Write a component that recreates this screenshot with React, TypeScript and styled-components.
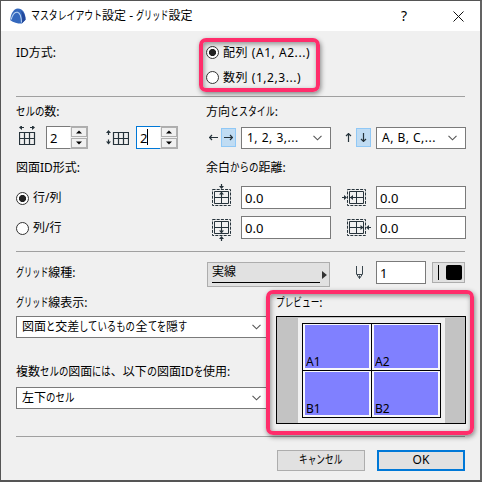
import React from 'react';
import styled, { createGlobalStyle } from 'styled-components';

const Global = createGlobalStyle`
  * { box-sizing: border-box; }
  body { margin: 0; font: 12px/18px "Noto Sans", "Noto Sans CJK JP", sans-serif; color: #000; }
`;

const Dialog = styled.main`
  position: relative;
  width: 482px;
  height: 482px;
  border: 1px solid #555;
  border-width: 1px 2px 2px 1px;
  border-color: #555 #636363 #555 #555;
  background: #f0f0f0;
  overflow: hidden;
`;
const TitleBar = styled.header`
  height: 30px;
  display: flex;
  align-items: center;
  background: #fff;
  padding: 0 16px 0 9px;
`;
const TitleText = styled.div`flex: 1; padding-left: 5px;`;
const TitleIcons = styled.div`display: flex; align-items: center; gap: 46px;`;
const Body = styled.div`padding: 0 15px; width: 480px;`;
const Rule = styled.hr`
  height: 1px;
  border: 0;
  margin: 0;
  width: 449px;
  background: #a0a0a0;
`;
const Row = styled.div<{ $h: number; $top?: number }>`
  display: flex;
  align-items: center;
  height: ${p => p.$h}px;
  padding-top: ${p => p.$top ?? 0}px;
`;
const Columns = styled.div<{ $h: number }>`
  display: grid;
  grid-template-columns: 190px 260px;
  height: ${p => p.$h}px;
`;
const Gap = styled.div<{ $w: number }>`flex: none; width: ${p => p.$w}px;`;
const Label = styled.span<{ $track?: number; $size?: number }>`
  flex: none;
  white-space: nowrap;
  font-size: ${p => p.$size ?? 12}px;
  letter-spacing: ${p => p.$track ?? 0}px;
`;
const KanaRun = styled.span<{ $em: number; $scale: number }>`
  display: inline-block;
  width: ${p => p.$em}em;
  letter-spacing: 0;
  white-space: nowrap;
  transform: scaleX(${p => p.$scale});
  transform-origin: 0 50%;
`;
const RadioLabel = styled.div`display: flex; align-items: center; gap: 4px; height: 24px;`;
const Dot = styled.span<{ $on?: boolean }>`
  width: 13px;
  height: 13px;
  border: 1px solid #333;
  border-radius: 50%;
  background: ${p => (p.$on ? 'radial-gradient(circle, #222 3.2px, #fff 3.9px)' : '#fff')};
`;
const Field = styled.div<{ $w: number; $h?: number }>`
  width: ${p => p.$w}px;
  height: ${p => p.$h ?? 23}px;
  flex: none;
  display: flex;
  align-items: center;
  border: 1px solid #7a7a7a;
  background: #fff;
  padding-left: 3px;
  font-size: 13px;
`;
const SelectBox = styled(Field)`
  justify-content: space-between;
  padding: 0 8px 0 5px;
`;
const Spinner = styled.div`
  display: flex;
  flex: none;
  width: 42px;
  height: 23px;
  border: 1px solid #adadad;
  background: #f0f0f0;
`;
const SpinValue = styled.div<{ $focus?: boolean }>`
  width: 24px;
  height: 23px;
  margin: -1px 0 0 -1px;
  border: solid ${p => (p.$focus ? '#0078d7' : '#7a7a7a')};
  border-width: 1px 0 1px 1px;
  background: #fff;
  padding: 2px 0 0 3px;
  font-size: 13px;
  display: flex;
`;
const Caret = styled.i`width: 1px; height: 16px; background: #000;`;
const SpinButtons = styled.div`flex: 1; display: flex; flex-direction: column; gap: 1px; padding-left: 1px;`;
const SpinButton = styled.div`
  flex: 1;
  border: 1px solid #b0b0b0;
  display: flex;
  align-items: center;
  justify-content: center;
`;
const Arrow = styled.div<{ $on?: boolean }>`
  width: 15px;
  height: 19px;
  flex: none;
  display: flex;
  align-items: center;
  justify-content: center;
  border: 1px solid ${p => (p.$on ? '#90c8f6' : 'transparent')};
  background: ${p => (p.$on ? '#c0dcf3' : 'transparent')};
`;
const LineButton = styled.div`
  width: 123px;
  height: 25px;
  margin-top: 4px;
  flex: none;
  border: 1px solid #adadad;
  background: #e1e1e1;
  display: flex;
  align-items: center;
  padding: 0 2px 0 4px;
`;
const LineSample = styled.div`
  width: 109px;
  height: 18px;
  margin: -1px 2px 0 0;
  border-bottom: 1px solid #000;
  line-height: 14px;
`;
const PenButton = styled.div`
  width: 33px;
  height: 21px;
  flex: none;
  border: 1px solid #adadad;
  background: #e1e1e1;
  display: flex;
  align-items: center;
  padding-left: 5px;
  gap: 7px;
`;
const PenLine = styled.i`width: 1px; height: 15px; background: #000;`;
const PenSwatch = styled.i`width: 16px; height: 15px; border-radius: 2px; background: #000;`;
const Preview = styled.div`
  width: 190px;
  height: 108px;
  border: 1px solid #000;
  background: #c3c3c3;
  padding: 1px 0 0 21px;
`;
const Sheet = styled.div`
  width: 147px;
  height: 105px;
  background: #f0f0f0;
  padding: 5px 4px;
`;
const Cells = styled.div`
  width: 139px;
  height: 95px;
  border: 1px solid #000;
  background: #000;
  display: grid;
  grid-template: 46px 46px / 68px 68px;
  gap: 1px;
`;
const Cell = styled.div`
  border: solid #f7f7fa;
  border-width: 1px 2px 2px 2px;
  background: #8080ff;
  display: flex;
  align-items: flex-end;
  padding-left: 1px;
  line-height: 12px;
`;
const Button = styled.div<{ $primary?: boolean }>`
  width: 88px;
  height: 21px;
  background: #e1e1e1;
  border: ${p => (p.$primary ? '2px solid #0078d7' : '1px solid #adadad')};
  display: flex;
  align-items: center;
  justify-content: center;
`;
const Highlight = styled.div<{ $x: number; $y: number; $w: number; $h: number }>`
  position: absolute;
  left: ${p => p.$x}px;
  top: ${p => p.$y}px;
  width: ${p => p.$w}px;
  height: ${p => p.$h}px;
  border: 4px solid #ff2d6b;
  border-radius: 7px;
  box-shadow: 1px 2px 5px rgba(0,0,0,.45), inset 1px 2px 5px rgba(0,0,0,.4);
`;

// Advance width of one kana in em: UI Japanese fonts set kana narrower than kanji.
const kanaWidth = (c: string) => {
  if ('ッャュ'.includes(c)) return 0.57;
  if ('イリトド'.includes(c)) return 0.68;
  if (c === 'の') return 0.84;
  return c >= 'ァ' ? 0.76 : 0.77;
};
const Text = ({ children, track, size }: { children: string; track?: number; size?: number }) => (
  <Label $track={track} $size={size}>
    {children.split(/([ぁ-んァ-ヶー]+)/).map((run, i) => {
      if (i % 2 === 0) return run;
      const em = [...run].reduce((sum, c) => sum + kanaWidth(c), 0);
      return <KanaRun key={i} $em={em} $scale={em / run.length}>{run}</KanaRun>;
    })}
  </Label>
);

const Logo = () => (
  <svg width="16" height="16" viewBox="0 0 16 16">
    <path d="M.3 12.200C.5 6 3.500.800 7.800.5 12.500.5 15.700 5 15.500 11.800L11.800 15.500C8 15.600 3.500 14.800.3 12.200Z" fill="#3468bd" />
    <path d="M11 3C14 4.500 15.500 8 15.500 11.800L11.800 15.500C12.500 11 12.500 6.500 11 3Z" fill="#23489b" />
    <path d="M1.200 11.500C2.500 6.500 5 3.800 7.500 4.300 10.300 5 11.300 9 11.500 14.500" fill="none" stroke="#b9d3f2" strokeWidth="1.100" />
  </svg>
);
const Chevron = () => (
  <svg width="9" height="6" viewBox="0 0 9 6"><path d="M.5.8 4.500 4.800 8.500.8" fill="none" stroke="#555" strokeWidth="1.100" /></svg>
);
const turns = { right: 0, down: 90, left: 180, up: 270 };
type Dir = keyof typeof turns;
const DirIcon = ({ dir }: { dir: Dir }) => (
  <svg width="9" height="9" viewBox="0 0 9 9">
    <path d="M0 4.500H9M6 2 8.400 4.500 6 7" transform={`rotate(${turns[dir]} 4.500 4.500)`} fill="none" stroke="#26333b" strokeWidth="1.200" />
  </svg>
);
const MiniArrow = ({ x, y, dir }: { x: number; y: number; dir: Dir }) => (
  <path d="M0 0-3-2.500V-.6H-5V.6H-3V2.500Z" transform={`translate(${x} ${y}) rotate(${turns[dir]})`} fill="#26333b" />
);
const CountIcon = ({ vertical }: { vertical?: boolean }) => (
  <svg width="23" height="23" viewBox="0 0 23 23">
    <path
      d="M.5 6.500H15.500V18.500H.5ZM5.500 6.500V18.500M10.500 6.500V18.500M.5 12.500H15.500"
      transform={vertical ? 'translate(7 0)' : undefined}
      fill="none"
      stroke="#26333b"
      strokeWidth="1.200"
    />
    {vertical ? (
      <><MiniArrow x={2.5} y={4} dir="up" /><MiniArrow x={2.5} y={18.5} dir="down" /></>
    ) : (
      <><MiniArrow x={0} y={1.5} dir="left" /><MiniArrow x={16} y={1.5} dir="right" /></>
    )}
  </svg>
);
type Side = 'top' | 'bottom' | 'left' | 'right';
const sideArrows: Record<Side, [number, number, Dir][]> = {
  top: [[11.5, 5, 'down'], [11.5, 7.5, 'up']],
  bottom: [[11.5, 19.5, 'down'], [11.5, 22, 'up']],
  left: [[6, 13.5, 'right'], [9, 13.5, 'left']],
  right: [[22.5, 13.5, 'right'], [25, 13.5, 'left']],
};
const MarginIcon = ({ side }: { side: Side }) => {
  const wide = side === 'left' || side === 'right';
  return (
    <svg width={wide ? 30 : 24} height="27">
      <g transform={wide ? 'translate(4 0)' : undefined} fill="none" stroke="#26333b">
        <path d="M2.500 5.500H20.500V21.500H2.500Z" strokeDasharray="3 1.200" />
        <path d="M4.500 7.500H18.500V19.500H4.500ZM4.500 13.500H18.500M11.500 7.500V19.500" />
      </g>
      {sideArrows[side].map(([x, y, dir]) => <MiniArrow key={dir} x={x} y={y} dir={dir} />)}
    </svg>
  );
};
const PenIcon = () => (
  <svg width="9" height="15" viewBox="0 0 9 15"><path d="M1.500 1V9L4.500 13.500 7.500 9V1M2 9.500H7M4.500 10.500V13.500" fill="none" stroke="#3a464d" /></svg>
);
const Triangle = ({ down }: { down?: boolean }) => (
  <svg width="6" height="4" viewBox="0 0 6 4"><path d={down ? 'M0 .5H6L3 3.500Z' : 'M0 3.500H6L3 .5Z'} fill="#000" /></svg>
);

const Radio = ({ on, text }: { on?: boolean; text: string }) => (
  <RadioLabel><Dot $on={on} /><Text track={text.includes('(') ? 0.55 : 0}>{text}</Text></RadioLabel>
);
const Select = ({ text, w, track }: { text: string; w: number; track?: number }) => (
  <SelectBox $w={w} $h={22}><Text track={track}>{text}</Text><Chevron /></SelectBox>
);
const Stepper = ({ focus }: { focus?: boolean }) => (
  <Spinner>
    <SpinValue $focus={focus}>2{focus && <Caret />}</SpinValue>
    <SpinButtons>
      <SpinButton><Triangle /></SpinButton>
      <SpinButton><Triangle down /></SpinButton>
    </SpinButtons>
  </Spinner>
);

export default function App() {
  return (
    <Dialog>
      <Global />
      <TitleBar>
        <Logo />
        <TitleText><Text>マスタレイアウト設定 - グリッド設定</Text></TitleText>
        <TitleIcons>
          <Text size={14}>?</Text>
          <svg width="11" height="11" viewBox="0 0 11 11"><path d="M.5.5 10.500 10.500M10.500.5.5 10.500" stroke="#111" /></svg>
        </TitleIcons>
      </TitleBar>
      <Body>
        <Columns $h={65}>
          <div><Row $h={44}><Text>ID方式:</Text></Row></div>
          <div>
            <Row $h={43}><Radio on text="配列 (A1, A2...)" /></Row>
            <Row $h={7}><Radio text="数列 (1,2,3...)" /></Row>
          </div>
        </Columns>
        <Rule />
        <Columns $h={154}>
          <div>
            <Row $h={29}><Text>セルの数:</Text></Row>
            <Row $h={23}>
              <Gap $w={3} /><CountIcon /><Gap $w={4} /><Stepper />
              <Gap $w={18} /><CountIcon vertical /><Gap $w={7} /><Stepper focus />
            </Row>
            <Row $h={37}><Text>図面ID形式:</Text></Row>
            <Row $h={24}><Radio on text="行/列" /></Row>
            <Row $h={36}><Radio text="列/行" /></Row>
          </div>
          <div>
            <Row $h={29}><Text>方向とスタイル:</Text></Row>
            <Row $h={23}>
              <Arrow><DirIcon dir="left" /></Arrow><Arrow $on><DirIcon dir="right" /></Arrow>
              <Gap $w={5} /><Select w={90} text="1, 2, 3,..." track={0.5} />
              <Gap $w={10} /><Arrow><DirIcon dir="up" /></Arrow><Arrow $on><DirIcon dir="down" /></Arrow>
              <Gap $w={5} /><Select w={90} text="A, B, C,..." track={0.5} />
            </Row>
            <Row $h={37}><Text>余白からの距離:</Text></Row>
            <Row $h={23}>
              <Gap $w={4} /><MarginIcon side="top" /><Gap $w={7} /><Field $w={90}>0.0</Field>
              <Gap $w={10} /><MarginIcon side="left" /><Gap $w={5} /><Field $w={90}>0.0</Field>
            </Row>
            <Row $h={37}>
              <Gap $w={4} /><MarginIcon side="bottom" /><Gap $w={7} /><Field $w={90}>0.0</Field>
              <Gap $w={10} /><MarginIcon side="right" /><Gap $w={5} /><Field $w={90}>0.0</Field>
            </Row>
          </div>
        </Columns>
        <Rule />
        <Columns $h={38}>
          <Row $h={42}><Text>グリッド線種:</Text></Row>
          <Row $h={41}>
            <Gap $w={1} />
            <LineButton>
              <LineSample>実線</LineSample>
              <svg width="5" height="8" viewBox="0 0 5 8"><path d="M0 0V8L5 4Z" fill="#333" /></svg>
            </LineButton>
            <Gap $w={25} /><PenIcon /><Gap $w={12} /><Field $w={50}>1</Field><Gap $w={6} /><PenButton><PenLine /><PenSwatch /></PenButton>
          </Row>
        </Columns>
        <Columns $h={26}>
          <Row $h={26}><Text>グリッド線表示:</Text></Row>
          <Row $h={26}><Gap $w={70} /><Text>プレビュー:</Text></Row>
        </Columns>
        <Columns $h={120}>
          <div>
            <Select w={254} text="図面と交差しているもの全てを隠す" />
            <Row $h={49} $top={18}><Text>複数セルの図面には、以下の図面IDを使用:</Text></Row>
            <Select w={254} text="左下のセル" />
          </div>
          <Row $h={108}><Gap $w={70} />
            <Preview><Sheet><Cells>{['A1', 'A2', 'B1', 'B2'].map(id => <Cell key={id}>{id}</Cell>)}</Cells></Sheet></Preview>
          </Row>
        </Columns>
        <Rule />
        <Row $h={46}><Gap $w={261} /><Button><Text>キャンセル</Text></Button><Gap $w={12} /><Button $primary>OK</Button></Row>
      </Body>
      <Highlight $x={198} $y={37} $w={121} $h={54} />
      <Highlight $x={265} $y={289} $w={208} $h={145} />
    </Dialog>
  );
}
